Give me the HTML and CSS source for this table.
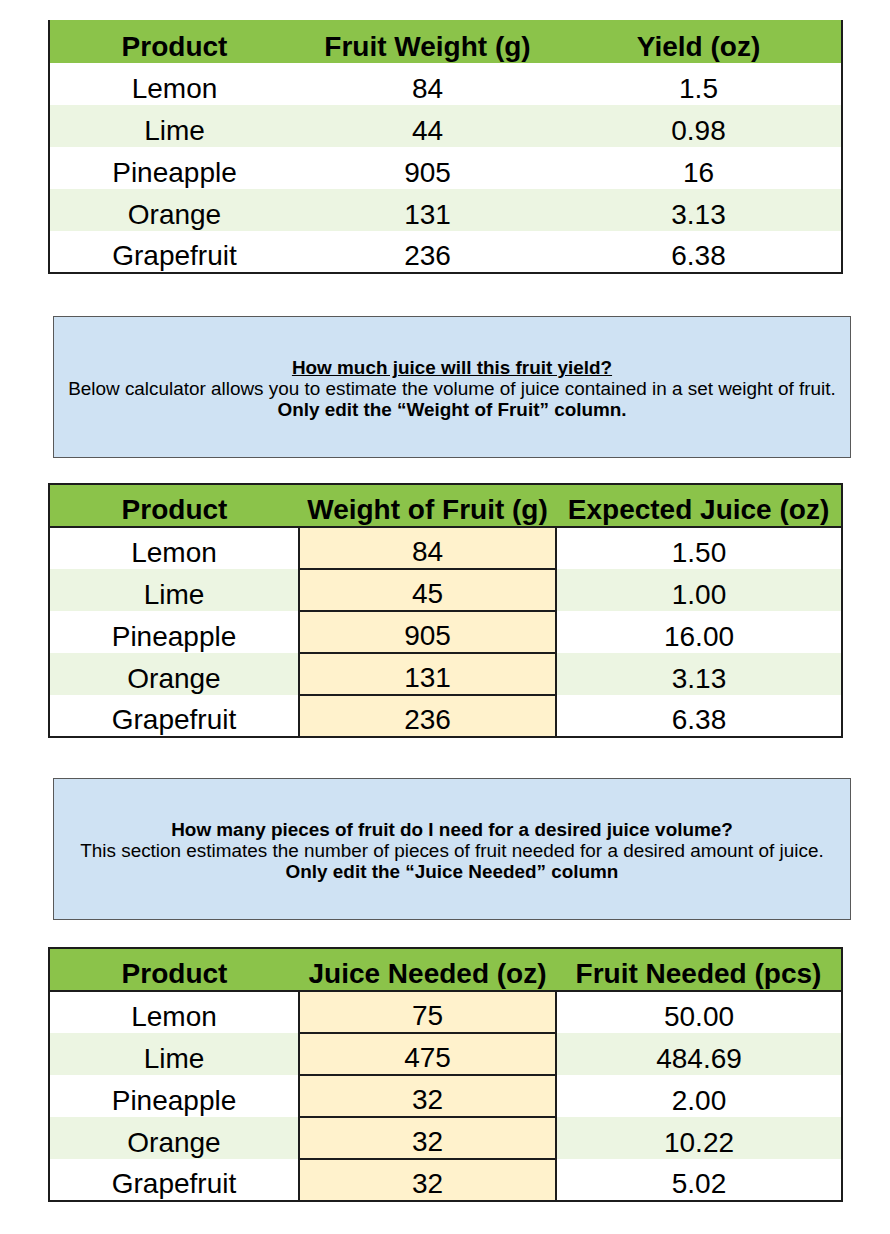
FILE: index.html
```html
<!DOCTYPE html>
<html lang="en">
<head>
<meta charset="utf-8">
<title>Fruit Juice Yield Calculator</title>
<link rel="stylesheet" href="styles.css">
</head>
<body>
<main class="page">
  <table class="sheet sheet-ref">
    <colgroup><col class="c1"><col class="c2"><col class="c3"></colgroup>
    <thead>
      <tr><th>Product</th><th>Fruit Weight (g)</th><th>Yield (oz)</th></tr>
    </thead>
    <tbody>
      <tr><td>Lemon</td><td>84</td><td>1.5</td></tr>
      <tr class="alt"><td>Lime</td><td>44</td><td>0.98</td></tr>
      <tr><td>Pineapple</td><td>905</td><td>16</td></tr>
      <tr class="alt"><td>Orange</td><td>131</td><td>3.13</td></tr>
      <tr><td>Grapefruit</td><td>236</td><td>6.38</td></tr>
    </tbody>
  </table>

  <section class="note note-1">
    <p class="note-title underline">How much juice will this fruit yield?</p>
    <p>Below calculator allows you to estimate the volume of juice contained in a set weight of fruit.</p>
    <p class="bold">Only edit the “Weight of Fruit” column.</p>
  </section>

  <table class="sheet sheet-calc">
    <colgroup><col class="c1"><col class="c2"><col class="c3"></colgroup>
    <thead>
      <tr><th>Product</th><th>Weight of Fruit (g)</th><th>Expected Juice (oz)</th></tr>
    </thead>
    <tbody>
      <tr><td>Lemon</td><td class="input">84</td><td>1.50</td></tr>
      <tr class="alt"><td>Lime</td><td class="input">45</td><td>1.00</td></tr>
      <tr><td>Pineapple</td><td class="input">905</td><td>16.00</td></tr>
      <tr class="alt"><td>Orange</td><td class="input">131</td><td>3.13</td></tr>
      <tr><td>Grapefruit</td><td class="input">236</td><td>6.38</td></tr>
    </tbody>
  </table>

  <section class="note note-2">
    <p class="note-title">How many pieces of fruit do I need for a desired juice volume?</p>
    <p>This section estimates the number of pieces of fruit needed for a desired amount of juice.</p>
    <p class="bold">Only edit the “Juice Needed” column</p>
  </section>

  <table class="sheet sheet-calc sheet-last">
    <colgroup><col class="c1"><col class="c2"><col class="c3"></colgroup>
    <thead>
      <tr><th>Product</th><th>Juice Needed (oz)</th><th>Fruit Needed (pcs)</th></tr>
    </thead>
    <tbody>
      <tr><td>Lemon</td><td class="input">75</td><td>50.00</td></tr>
      <tr class="alt"><td>Lime</td><td class="input">475</td><td>484.69</td></tr>
      <tr><td>Pineapple</td><td class="input">32</td><td>2.00</td></tr>
      <tr class="alt"><td>Orange</td><td class="input">32</td><td>10.22</td></tr>
      <tr><td>Grapefruit</td><td class="input">32</td><td>5.02</td></tr>
    </tbody>
  </table>
</main>
</body>
</html>
```

FILE: styles.css
```css
html, body {
  margin: 0;
  padding: 0;
  background: #ffffff;
}

body {
  font-family: "Liberation Sans", Arial, sans-serif;
  color: #000000;
}

.page {
  display: flex;
  flex-direction: column;
  align-items: flex-start;
  padding: 20px 0 30px 48px;
}

/* ---------- tables ---------- */
.sheet {
  border-collapse: collapse;
  table-layout: fixed;
  width: 793px;
  font-size: 28px;
}

.sheet .c1 { width: 250px; }
.sheet .c2 { width: 257px; }
.sheet .c3 { width: 286px; }

.sheet th,
.sheet td {
  padding: 0;
  height: 42px;
  box-sizing: border-box;
  line-height: 32px;
  text-align: center;
  vertical-align: bottom;
  white-space: nowrap;
  overflow: visible;
}

.sheet th {
  font-weight: bold;
  background: #8bc34a;
  height: 43px;
}

.sheet td {
  font-weight: normal;
  background: #ffffff;
}

.sheet tr.alt td {
  background: #ecf5e2;
}

.sheet td.input,
.sheet tr.alt td.input {
  background: #fff2cc;
  border: 2px solid #1c1c1c;
}

/* reference table: border on sides and bottom only */
.sheet-ref {
  border-left: 2px solid #1c1c1c;
  border-right: 2px solid #1c1c1c;
  border-bottom: 2px solid #1c1c1c;
}

/* calculator tables: full outline + header rule */
.sheet-calc {
  border: 2px solid #1c1c1c;
}

.sheet-calc thead th {
  border-bottom: 2px solid #1c1c1c;
}

/* ---------- info notes ---------- */
.note {
  box-sizing: border-box;
  width: 798px;
  height: 142px;
  margin-left: 5px;
  padding-top: 3px;
  background: #cfe2f3;
  border: 1px solid #595959;
  display: flex;
  flex-direction: column;
  justify-content: center;
  align-items: center;
  text-align: center;
  font-size: 18.9px;
  line-height: 21px;
}

.note p {
  margin: 0;
  white-space: nowrap;
}

.note-1 {
  margin-top: 42px;
  margin-bottom: 25px;
}

.note-2 {
  margin-top: 40px;
  margin-bottom: 27px;
}

.note-title,
.bold {
  font-weight: bold;
}

.underline {
  text-decoration: underline;
}
```
